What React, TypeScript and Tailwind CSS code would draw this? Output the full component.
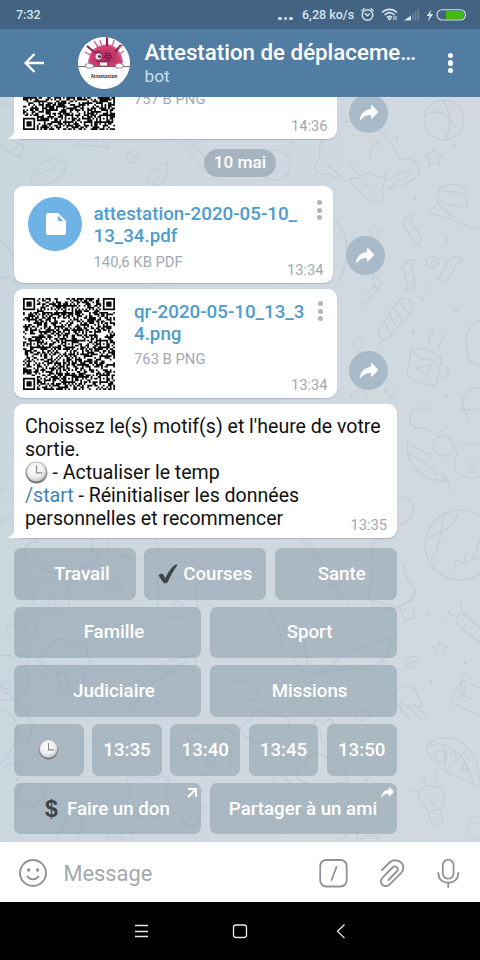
import React from "react";

const QR_SIZE = 53;

function buildQr(seed: number): string {
  let s = seed;
  const rnd = () => {
    s = (s * 1664525 + 1013904223) >>> 0;
    return s / 4294967296;
  };
  const grid: boolean[][] = [];
  for (let y = 0; y < QR_SIZE; y++) {
    grid.push([]);
    for (let x = 0; x < QR_SIZE; x++) grid[y].push(rnd() < 0.54);
  }
  for (let i = 8; i < QR_SIZE - 8; i++) {
    grid[6][i] = i % 2 === 0;
    grid[i][6] = i % 2 === 0;
  }
  const square = (cx: number, cy: number, r: number, light: number[]) => {
    for (let dy = -r; dy <= r; dy++)
      for (let dx = -r; dx <= r; dx++) {
        const x = cx + dx;
        const y = cy + dy;
        if (x < 0 || y < 0 || x >= QR_SIZE || y >= QR_SIZE) continue;
        grid[y][x] = !light.includes(Math.max(Math.abs(dx), Math.abs(dy)));
      }
  };
  [[3, 3], [49, 3], [3, 49]].forEach(([x, y]) => square(x, y, 4, [2, 4]));
  [[26, 6], [6, 26], [26, 26], [46, 26], [26, 46], [46, 46]].forEach(([x, y]) => square(x, y, 2, [1]));
  let d = "";
  grid.forEach((row, y) => row.forEach((on, x) => { if (on) d += `M${x} ${y}h1v1h-1z`; }));
  return d;
}

const QR_A = buildQr(757);
const QR_B = buildQr(763);

const Qr = ({ d }: { d: string }) => (
  <svg viewBox="0 0 53 53" className="h-[92px] w-[92px] shrink-0 text-[#0b0b0b]">
    <path d={d} fill="currentColor" />
  </svg>
);

const Star = ({ x, y, r = 1 }: { x: number; y: number; r?: number }) => (
  <path transform={`translate(${x} ${y}) scale(${r})`} d="M0-9l2.500 6 6.500.5-5 4.200 2 6.300-6-3.300-5.500 3.500 1.500-6.500-5-4 6.500-.7z" />
);
const Swirl = ({ x, y }: { x: number; y: number }) => (
  <path transform={`translate(${x} ${y})`} d="M0 1c-2-1-1-4 2-3 4 2 2 7-2 7-6 0-8-7-4-10 5-4 12 0 11 6" />
);
const Ball = ({ x, y, r }: { x: number; y: number; r: number }) => (
  <g transform={`translate(${x} ${y}) scale(${r / 20})`}>
    <circle r="20" />
    <path d="M-19-5c10-6 22-4 30 12M-2-20c8 8 10 24 4 39" />
  </g>
);
const Cloud = ({ x, y, r = 1 }: { x: number; y: number; r?: number }) => (
  <path transform={`translate(${x} ${y}) scale(${r})`} d="M-22 12c-14-2-10-18 0-16 0-14 20-16 24-5 10-5 20 4 14 11 10 3 4 14-4 10-8 10-24 8-34 0z" />
);
const Leaf = ({ x, y, r = 0 }: { x: number; y: number; r?: number }) => (
  <path transform={`translate(${x} ${y}) rotate(${r})`} d="M-5 12c-8-6-3-14 0-15 2 3 3 3 4 0 0-6 4-9 8-11-1 9 5 14-1 24zM-6 16c3-6 5-10 7-14" />
);
const Feather = ({ x, y, r = 0 }: { x: number; y: number; r?: number }) => (
  <path transform={`translate(${x} ${y}) rotate(${r})`} d="M-44 6c14-26 58-30 86-16-12 22-52 32-86 16zM-36 4c26-12 44-14 66-13M-10-8l12 4M4-10l12 5" />
);
const Bear = ({ x, y, r = 1 }: { x: number; y: number; r?: number }) => (
  <g transform={`translate(${x} ${y}) scale(${r})`}>
    <path d="M-18-10c-8-12 4-18 10-11 5-2 11-2 16 0 7-7 18 0 9 11 8 18-2 28-17 28s-26-10-18-28z" />
    <path d="M-8-4h2M6-4h2M-5 5c4-5 8-5 10 0-2 4-8 4-10 0zM-4 10c3 3 6 3 9 0" />
  </g>
);
const Ribbon = ({ x, y, r = 0 }: { x: number; y: number; r?: number }) => (
  <path transform={`translate(${x} ${y}) rotate(${r})`} d="M-5-15c-8 14 10 16 8 30l7-5c0-14-14-16-9-27z" />
);

const Wallpaper = () => (
  <svg viewBox="0 97 480 745" className="absolute inset-0 h-[745px] w-[480px]" fill="none" strokeWidth="1.100" strokeLinejoin="round" strokeLinecap="round">
    <defs>
      <linearGradient id="wall" x1="0" y1="0.300" x2="1" y2="0.500">
        <stop offset="0" stopColor="#cad6de" />
        <stop offset="0.500" stopColor="#cfd8e0" />
        <stop offset="1" stopColor="#d1d8e0" />
      </linearGradient>
    </defs>
    <rect y="97" width="480" height="745" fill="url(#wall)" />
    <g stroke="#b6c2d0" strokeOpacity=".55">
      <path d="M0 105c12-5 18 8 10 14M4 152c10 2 18-8 24-24M0 146l20 12 4-12-9-4M75 144l20-13 14 17zM95 131l3 16M180 140l24 30M186 134l26 34M190 148l14-10M33 176c5-15 23-22 33-11-1 14-17 20-33 21-4-2-4-6 0-10zM38 175l18-8" />
      <Swirl x={133} y={158} />
      <Leaf x={158} y={174} r={15} />
      <circle cx="275" cy="165" r="15" />
      <path d="M320 158c-4-20 14-40 36-36 22 0 38 20 43 38 20-6 28 12 12 21-8 4-16 8-22 8l10-10c8 0 12-6 8-8-8-2-10 8-22 9M320 158c-12 8-2 20 8 16l20 8M370 160c0-14 8-22 10-14M328 165l14 12M349 164l10 12" />
      <path d="M350 178l10 0c2-6 14-6 18 0l8-3-3 12c-4 8 4 12-2 15-8 2-18-4-22-12l-8-7zM364 185h3M374 186h3" />
      <Ball x={444} y={120} r={20} />
      <Star x={434} y={157} />
      <path d="M439 190l27 4 1 14-30-6zM440 188c8-6 24-4 27 4M437 203l-8 10 22 6 22 10 12-4M439 205l14 12" />
      <Ribbon x={411} y={232} />
      <Ribbon x={448} y={268} r={60} />
      <Ribbon x={408} y={276} r={20} />
      <Swirl x={432} y={263} />
      <Star x={375} y={232} r={0.800} />
      <path d="M336 222c16 14 12 46 2 60M372 272l10 12-8 4zM0 240l12 12 3 30-10-6M4 262a8 8 0 1 0 6 14" />
      <path d="M382 325c-8 8-2 16 5 14l24-27c6-8-4-18-12-12zM384 321l8 14M389 314l8 14M394 308l8 12M400 302l7 10M384 338l-6 8M376 284l-16 20M380 287l-16 18M410 286l6-10M424 290l4-6M418 296l6 6" />
      <circle cx="358" cy="344" r="5" />
      <path d="M411 350c8-4 26 1 30 9l-5 26c-8 2-24-3-29-10zM411 350c4 8 22 12 30 9M441 365c10-2 10 14-2 13M430 344c-6-6 6-8 2-14M440 350c-6-6 6-10 4-16M416 367l16-2-6 12-4-5z" />
      <path d="M466 340c2-14 12-22 18-17M466 340l2 20 14 6M464 398c4-12 10-8 18-12M462 402l6 16M350 398c4-12 16-10 18 0M384 390l8 8 5-8" />
      <path d="M430 409c-18-6-26 12-16 18 6 4 12-2 16 6M408 440c-4 20 10 36 26 40 6 3 10 2 14-2M412 446l16 8c8-4 4 10-4 7l-14-6M435 480c10-6 18 4 14 10M449 425c-4 6-14 4-10 13" />
      <circle cx="443" cy="446" r="10" />
      <Bear x={472} y={463} r={0.850} />
      <path d="M426 472c4-8 10-5 9 3 8-5 12 3 8 7M462 396v14h18" />
      <path d="M398 498c18-8 22 26 0 26" />
      <circle cx="460" cy="545" r="35" />
      <path d="M445 514c-6 16-2 30-14 46M428 537c12-2 24-10 30-22M454 570l2-10 8 3 2-10 8 4 6-16M462 563l18-6" />
      <Cloud x={68} y={548} r={1.400} />
      <Cloud x={138} y={540} />
      <Star x={116} y={586} r={0.900} />
      <Bear x={52} y={598} r={0.900} />
      <Bear x={178} y={600} />
      <path d="M302 540l40 60M306 538l42 66M324 590l18-10M384 540c-14-4-16 16-10 22l-6 36c10 18 38 14 48-8-6-8-12-12-12-26M370 600l36 10M4 490a14 16 0 1 0 8 22" />
      <Ball x={22} y={630} r={15} />
      <Cloud x={70} y={655} />
      <path d="M55 665l6 28 18 2 8-28M64 668l4 20M50 678l-12-8" />
      <Feather x={164} y={684} r={-28} />
      <Swirl x={120} y={632} />
      <path d="M270 610c5 18 10 14 12 36l20 24c20 10 24-4 46-18l20-6 24-8c-2 14-8 24-18 28l-50 6M284 625l20 15 4 24M316 670l18 10M399 605l6 16 10-4-2-10M404 604c8-2 12-8 10-14" />
      <Star x={440} y={649} r={0.850} />
      <Swirl x={412} y={663} />
      <path d="M457 618c2-6 8-5 12 0l11 10M456 623l24 20M466 624l-6 8M453 616l-5-5M462 612l-1-8M448 622l-7-2" />
      <path d="M450 702l12-22 18 8M450 702l30 14M462 680l-2 18M455 692l18 7M466 682l-4 16M459 677l8-4 4 6" />
      <path d="M395 695c2-12 20-12 22 0l6 12-20-2zM399 706l10 12M407 706l14 14M414 704l13 12M395 698l6 14" />
      <Bear x={6} y={680} r={1.100} />
      <path d="M0 710c26 4 20 34 0 54M28 742l8-24M20 718c4-8 12-4 9 4M10 696c20 14 26 30 18 42M6 765l20-4" />
      <Cloud x={272} y={726} />
      <path d="M228 685c20-10 36 4 28 14-10 2-20 0-28-14zM320 730c-10-8-6-14 4-6 6-10 14-2 8 8l-10 12z" />
      <Swirl x={362} y={716} />
      <Bear x={210} y={755} r={1.100} />
      <Cloud x={327} y={770} />
      <path d="M426 750c2-9 10-12 20-12 20 0 36 20 32 48l-32-14c-8-6-16-14-20-22zM429 746c12-6 36 0 44 37M445 745v27l22-22M454 750l-4 6 7 1zM465 762l-4 7 7 2z" />
      <circle cx="441" cy="756" r="6" />
      <path d="M427 810c-14-14-8-26 6-24 12 0 14 14 7 24l3 13-11 2zM428 812l12-3M426 783l-3-7M435 781l1-8M418 792l-8-3" />
      <path d="M430 798l3 8 5-8M270 775l34 38M275 768l38 38M344 810l24-32M350 815l26-34M18 798a13 12 0 1 1 25 0l-10 9zM56 842l14-30 14 6-8 24" />
      <Bear x={148} y={800} />
      <Leaf x={192} y={815} r={32} />
      <Ball x={480} y={828} r={12} />
      <Ball x={120} y={842} r={14} />
      <path d="M342 842c8-20 22-6 14-2M360 842c6-14 24-2 18-2" />
      <g strokeWidth="2.800">
        <path d="M293 143h.1M397 138h.1M454 146h.1M415 198h.1M447 240h.1M401 268h.1M413 332h.1M456 311h.1M446 396h.1M97 638h.1M427 615h.1M465 663h.1M431 682h.1M202 790h.1M32 603h.1M90 713h.1M182 765h.1M17 780h.1M357 626h.1" />
      </g>
    </g>
  </svg>
);

const ShareArrow = ({ className }: { className: string }) => (
  <svg viewBox="0 0 20 17" className={className} fill="currentColor">
    <path d="M12 1c0-.9.8-1.200 1.500-.6l5.700 6c.6.600.6 1.200 0 1.800l-5.700 6c-.7.6-1.500.3-1.500-.6v-3C7.500 10.400 4 12 1.300 15.700c-.5.7-1.200.4-1-.4C1.500 9 5.500 4.800 12 4.300z" />
  </svg>
);

const Share = () => (
  <button className="flex h-[39px] w-[39px] items-center justify-center rounded-full bg-[#a9bac8] text-white">
    <ShareArrow className="h-[16px] w-[20px]" />
  </button>
);

const Tail = () => (
  <svg viewBox="0 0 14 16" className="absolute bottom-0 left-[-6.500px] h-[16px] w-[14px]">
    <path d="M6.500 0v7c0 4-2.500 6.500-6 8-.7.500-.4 1 .5 1h13V0z" fill="#fff" />
  </svg>
);

const Dots = () => (
  <div className="flex flex-col gap-[2.500px]">
    <i className="h-[5px] w-[5px] rounded-full bg-[#b1b5b9]" />
    <i className="h-[5px] w-[5px] rounded-full bg-[#b1b5b9]" />
    <i className="h-[5px] w-[5px] rounded-full bg-[#b1b5b9]" />
  </div>
);

const Time = ({ children }: { children: string }) => (
  <span className="absolute bottom-[4px] right-[9.500px] text-[14.700px] leading-[17px] text-[#a1aab3]">{children}</span>
);

const BUBBLE = "relative rounded-[9px] bg-white shadow-[0_1px_1px_rgba(120,140,160,0.45)]";

const Clock = ({ className }: { className: string }) => (
  <svg viewBox="0 0 24 24" className={className}>
    <defs>
      <radialGradient id="face" cx=".42" cy=".35" r=".7">
        <stop offset="0" stopColor="#ffffff" />
        <stop offset=".65" stopColor="#ececec" />
        <stop offset="1" stopColor="#b4b4b4" />
      </radialGradient>
      <linearGradient id="rim" x1="0" y1="0" x2="0" y2="1">
        <stop offset="0" stopColor="#c4c4c4" />
        <stop offset="1" stopColor="#747474" />
      </linearGradient>
    </defs>
    <circle cx="12" cy="12" r="11.500" fill="url(#rim)" />
    <circle cx="12" cy="11.500" r="10" fill="url(#face)" />
    <path d="M12 4.500v8h6" fill="none" stroke="#8b8b8b" strokeWidth="1.300" />
  </svg>
);

const Key = ({ children, className = "" }: { children: React.ReactNode; className?: string }) => (
  <button className={`relative flex h-[51.500px] min-w-0 items-center justify-center whitespace-nowrap rounded-[7px] bg-[#8498a4]/50 text-[18.700px] font-medium leading-[22px] text-white ${className}`}>
    {children}
  </button>
);

const Header = () => (
  <header className="flex h-[68px] shrink-0 items-center bg-[#527da3] text-white">
    <svg viewBox="0 0 20 20" className="ml-[24px] h-[20px] w-[20px]" fill="none" stroke="currentColor" strokeWidth="2.300">
      <path d="M20 10H2M10.500 1L1.600 10l8.900 9" />
    </svg>
    <svg viewBox="0 0 52 52" className="ml-[34px] h-[52px] w-[52px]">
      <defs>
        <clipPath id="round"><circle cx="26" cy="26" r="26" /></clipPath>
        <radialGradient id="fur" cx=".5" cy=".6" r=".6">
          <stop offset="0" stopColor="#a02a5c" />
          <stop offset=".6" stopColor="#c93a6c" />
          <stop offset="1" stopColor="#d6487a" />
        </radialGradient>
      </defs>
      <g clipPath="url(#round)">
        <rect width="52" height="52" fill="#fff" />
        <path d="M11 29l0-5 1-4 1-3 3-4 4-3 4-1 5-1 5 1 4 3 3 4 2 4 1 4-1 5z" fill="url(#fur)" stroke="#cf4274" strokeWidth="2" strokeDasharray="1.500 .8" />
        <path d="M29 0v9M9 9l7 6M43 8l-6 7" stroke="#8f2450" strokeWidth="2.200" fill="none" />
        <path d="M16 4l4 6M36 3l-2 7M7 15l5 3M46 14l-6 4M22 3l2 6M41 11l4-3" stroke="#cc6d93" strokeWidth="1.400" fill="none" />
        <circle cx="20.500" cy="19.500" r="3" fill="#f4e6ec" />
        <circle cx="21.500" cy="19.500" r="1.500" fill="#473247" />
        <path d="M16 15.500l7-1M27 16l6 1M27 18.500h6v2.500h-5zM18 24l6 1 8-2" stroke="#6d1f48" strokeWidth="1" fill="none" />
        <path d="M22 25.500h7v3h-7z" fill="#fff" />
        <path d="M0 29.500h52" stroke="#70425a" strokeWidth=".8" />
        <path d="M7 28l4-2 5 2-1 3H9zM37 28l4-2 5 2-2 3h-6z" fill="#fff" stroke="#6e6a70" strokeWidth=".7" />
        <text x="26" y="41" textAnchor="middle" className="font-[Open_Sans] text-[4.700px] font-bold" fill="#333">Attestation</text>
      </g>
    </svg>
    <div className="ml-[14.500px] w-[290px]">
      <div className="whitespace-nowrap text-[22.300px] font-medium leading-[27px]">Attestation de déplaceme…</div>
      <div className="text-[17.300px] leading-[21px] text-[#c5def0]">bot</div>
    </div>
    <div className="ml-[13px] flex flex-col gap-[2px]">
      <i className="h-[5.500px] w-[5.500px] rounded-full bg-white" />
      <i className="h-[5.500px] w-[5.500px] rounded-full bg-white" />
      <i className="h-[5.500px] w-[5.500px] rounded-full bg-white" />
    </div>
  </header>
);

const StatusBar = () => (
  <div className="flex h-[29px] shrink-0 items-center bg-[#426482] text-[12.500px] font-medium text-[#d6e2ec]">
    <span className="ml-[16px] w-[262px] leading-[16px]">7:32</span>
    <div className="mt-[8px] flex w-[24px] gap-[2px]">
      <i className="h-[3.500px] w-[3.500px] rounded-full bg-current" />
      <i className="h-[3.500px] w-[3.500px] rounded-full bg-current" />
      <i className="h-[3.500px] w-[3.500px] rounded-full bg-current" />
    </div>
    <span className="w-[59px] whitespace-nowrap leading-[16px]">6,28 ko/s</span>
    <svg viewBox="361 0 119 29" className="h-[29px] w-[119px]" fill="none" stroke="currentColor">
      <circle cx="367.500" cy="15" r="5.300" strokeWidth="1.400" />
      <path d="M365 13.300l2.500 2.500 2.300-2.300M361.500 11l3-2.700M373.500 11l-3-2.700" strokeWidth="1.300" />
      <path d="M382 12.500c4.500-4.300 10.500-4.300 15 0M384.500 15c3.200-3 6.800-3 10 0M387 17.500c1.700-1.500 3.300-1.500 5 0" strokeWidth="1.700" />
      <path d="M388 18.500l1.500 2 1.500-2zM394 16v4M396 16v4" strokeWidth="1" />
      <path d="M404 20.500l7-5v5z" fill="currentColor" stroke="none" />
      <path d="M413 20.500v-7M415.700 20.500v-9M418.300 20.500V9.500" strokeWidth="1.500" opacity=".28" />
      <path d="M431.500 9.500l-5 6.500h3l-1.500 5.500 5.200-7.500h-3.200z" fill="currentColor" stroke="none" />
      <rect x="437" y="9.700" width="28.500" height="10.300" rx="5.100" strokeWidth="1.100" />
      <path d="M446 10.700h14a4.100 4.100 0 0 1 0 8.200h-14z" fill="#43bb13" stroke="none" />
    </svg>
  </div>
);

export default function App() {
  return (
    <div className="flex h-[960px] w-[480px] flex-col overflow-hidden bg-black font-[Roboto,sans-serif]">
      <StatusBar />
      <Header />

      <main className="relative h-[745px] shrink-0 overflow-hidden">
        <Wallpaper />
        <div className="relative mt-[-68.500px] flex flex-col pl-[14px]">
          <div className="flex items-end gap-[12px]">
            <div className={`${BUBBLE} flex h-[110px] w-[323px] pl-[9px] pt-[9px]`}>
              <Tail />
              <Qr d={QR_A} />
              <div className="ml-[19px] pt-[53px] text-[14.800px] leading-[17px] text-[#a1aab3]">757 B PNG</div>
              <Time>14:36</Time>
            </div>
            <div className="pb-[6px]"><Share /></div>
          </div>

          <div className="ml-[190px] mt-[10.500px] flex h-[28px] w-[72px] items-center justify-center rounded-full bg-[#a6b4bf] text-[17.200px] font-medium text-white">10 mai</div>

          <div className="mt-[9px] flex items-end gap-[12.500px]">
            <div className={`${BUBBLE} flex h-[97px] w-[319px] pl-[14px] pt-[11px]`}>
              <div className="flex h-[54px] w-[54px] shrink-0 items-center justify-center rounded-full bg-[#6fb2e5]">
                <svg viewBox="0 0 20 22" className="ml-[2px] h-[22px] w-[20px]">
                  <path d="M2.500 0H12l8 8v11.500a2.500 2.500 0 0 1-2.500 2.500h-15A2.500 2.500 0 0 1 0 19.500v-17A2.500 2.500 0 0 1 2.500 0z" fill="#fff" />
                  <path d="M11.800 2.500V8h5.500z" fill="#6fb2e5" />
                </svg>
              </div>
              <div className="ml-[11.500px] w-[218px] pt-[6px]">
                <div className="whitespace-nowrap text-[18.750px] font-medium leading-[22px] text-[#4f9bce]">attestation-2020-05-10_<br />13_34.pdf</div>
                <div className="mt-[7px] text-[14.800px] leading-[17px] text-[#a1aab3]">140,6 KB PDF</div>
              </div>
              <div className="ml-[5.500px] pt-[3px]"><Dots /></div>
              <Time>13:34</Time>
            </div>
            <div className="pb-[8px]"><Share /></div>
          </div>

          <div className="mt-[6px] flex items-end gap-[12px]">
            <div className={`${BUBBLE} flex h-[109px] w-[323px] pl-[9px] pt-[9px]`}>
              <Qr d={QR_B} />
              <div className="ml-[19px] w-[177px] pt-[3px]">
                <div className="whitespace-nowrap text-[18.750px] font-medium leading-[22px] text-[#4f9bce]">qr-2020-05-10_13_3<br />4.png</div>
                <div className="mt-[6px] text-[14.800px] leading-[17px] text-[#a1aab3]">763 B PNG</div>
              </div>
              <div className="ml-[7px] pt-[3px]"><Dots /></div>
              <Time>13:34</Time>
            </div>
            <div className="pb-[8px]"><Share /></div>
          </div>

          <div className={`${BUBBLE} mt-[6px] h-[134px] w-[382.500px] whitespace-nowrap pl-[11px] pt-[11px] text-[19.550px] leading-[23px] text-[#111]`}>
            <Tail />
            Choissez le(s) motif(s) et l'heure de votre<br />
            sortie.<br />
            <span className="flex items-center"><Clock className="mr-[4.500px] h-[23px] w-[23px]" />- Actualiser le temp</span>
            <span className="text-[#3f83b8]">/start</span> - Réinitialiser les données<br />
            personnelles et recommencer
            <Time>13:35</Time>
          </div>

          <div className="mt-[10px] flex w-[382.500px] flex-col gap-[7.200px]">
            <div className="grid grid-cols-3 gap-[8.700px]">
              <Key className="pl-[14px]">Travail</Key>
              <Key>
                <svg viewBox="0 0 20 20" className="mr-[5px] h-[20px] w-[20px]">
                  <path d="M.5 11.500c1.500-2 4-2.500 5.300 0l1.500 3C9.500 9 13 3.500 17 1c1.400-.8 2.800-.6 2 .8-3.500 5-6.500 10-9 15.700-.8 2-4 2.500-5 .5z" fill="#3e444a" />
                </svg>
                Courses
              </Key>
              <Key className="pl-[12px]">Sante</Key>
            </div>
            <div className="grid grid-cols-2 gap-[8.700px]">
              <Key className="pl-[13px]">Famille</Key>
              <Key className="pl-[13px]">Sport</Key>
            </div>
            <div className="grid grid-cols-2 gap-[8.700px]">
              <Key className="pl-[13px]">Judiciaire</Key>
              <Key className="pl-[13px]">Missions</Key>
            </div>
            <div className="grid grid-cols-5 gap-[8.700px]">
              <Key><Clock className="h-[21px] w-[21px]" /></Key>
              <Key>13:35</Key>
              <Key>13:40</Key>
              <Key>13:45</Key>
              <Key>13:50</Key>
            </div>
            <div className="grid grid-cols-2 gap-[8.700px]">
              <Key>
                <span className="mr-[9px] font-['Liberation_Sans'] text-[23px] font-bold text-[#3e444a]">$</span>
                Faire un don
                <svg viewBox="0 0 10 10" className="absolute right-[4px] top-[5px] h-[10px] w-[10px]" fill="none" stroke="currentColor" strokeWidth="1.900">
                  <path d="M1 1h8v8M9 1L1 9" />
                </svg>
              </Key>
              <Key>
                Partager à un ami
                <ShareArrow className="absolute right-[3px] top-[4px] h-[11px] w-[13px]" />
              </Key>
            </div>
          </div>
        </div>
      </main>

      <footer className="flex h-[60px] shrink-0 items-center bg-white pt-[2px]">
        <svg viewBox="0 0 28 28" className="ml-[19px] h-[28px] w-[28px]" fill="none" stroke="#8e9297" strokeWidth="1.900" strokeLinecap="round">
          <circle cx="14" cy="14" r="13" />
          <path d="M8.500 17.500c3 3.800 8 3.800 11 0" />
          <circle cx="9.700" cy="11" r="1.700" fill="#8e9297" stroke="none" />
          <circle cx="18.500" cy="11" r="1.700" fill="#8e9297" stroke="none" />
        </svg>
        <span className="ml-[16.500px] w-[255.500px] pt-[1px] text-[21.800px] leading-[26px] text-[#a4a9ae]">Message</span>
        <svg viewBox="319 859 142 29" className="h-[29px] w-[142px]" fill="none" stroke="#8e9297" strokeWidth="1.800" strokeLinecap="round" strokeLinejoin="round">
          <rect x="320.200" y="860" width="26.500" height="26.500" rx="6" />
          <path d="M336.500 867l-5 13" />
          <path d="M382 870l7.500-7.500c4.500-4.500 12-1.500 13.500 3 1 3 .2 5.500-2 7.700l-11 11c-4 4-10 1-9-4 .3-1.200.9-2 1.800-2.900l9.800-9.800c2.500-2.500 6.600.2 4.600 3.500l-8.700 9" />
          <rect x="442.800" y="859.700" width="10.800" height="19" rx="5.400" />
          <path d="M438.300 873c0 13 20 13 20 0M448.200 882.500v4.500" />
        </svg>
      </footer>

      <nav className="flex h-[58px] shrink-0 items-center">
        <svg viewBox="134 0 213 58" className="ml-[134px] h-[58px] w-[213px]" fill="none" stroke="#e8e8e8" strokeWidth="1.300">
          <path d="M135 23.500h13M135 29.500h13M135 34.500h13" />
          <rect x="233.500" y="23" width="13" height="12.500" rx="2.500" />
          <path d="M344.500 22.500l-7 6.800 7 6.800" />
        </svg>
      </nav>
    </div>
  );
}
